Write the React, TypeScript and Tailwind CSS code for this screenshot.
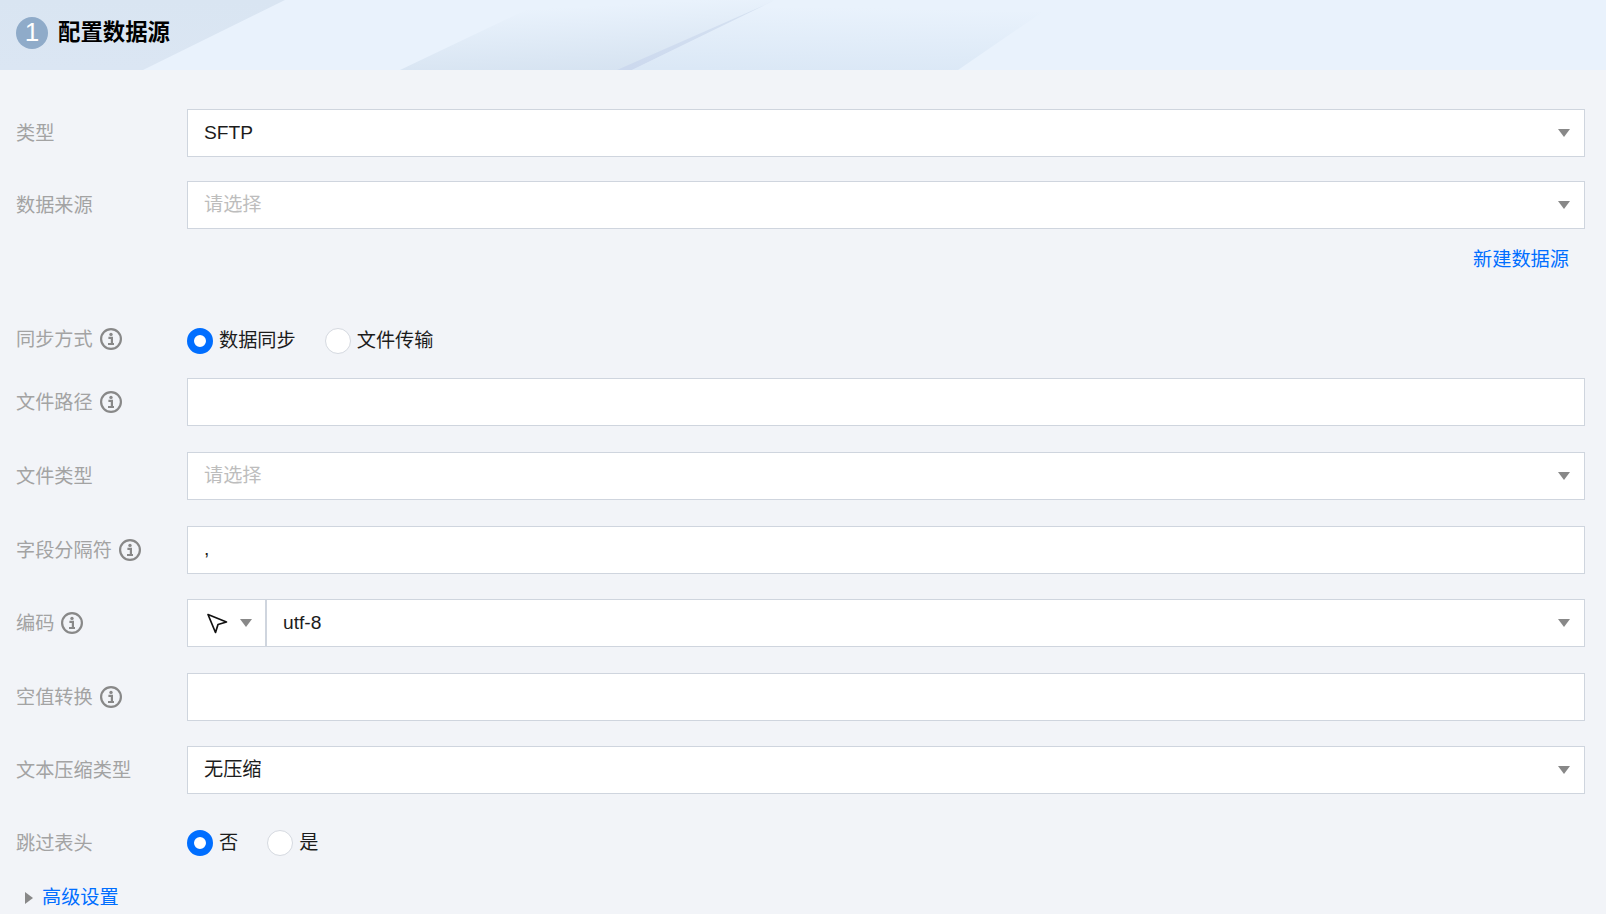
import type { ReactNode } from 'react'

const Caret = () => (
  <span className="h-0 w-0 border-x-[6.5px] border-t-[8px] border-x-transparent border-t-[#888888]" />
)

const InfoIcon = () => (
  <svg width="22" height="22" viewBox="0 0 22 22" fill="none" className="shrink-0">
    <circle cx="11" cy="11" r="9.9" stroke="#888888" strokeWidth="2.2" />
    <circle cx="11" cy="6.4" r="1.7" fill="#888888" />
    <path d="M8.4 9.9h3.5v6.2M8 16h6" stroke="#888888" strokeWidth="2.2" />
  </svg>
)

const Label = ({ text, info, lifted }: { text: string; info?: boolean; lifted?: boolean }) => (
  <div className={lifted ? 'mb-1 flex w-[171px] shrink-0 items-center gap-[7px] text-[#a3a3a3]' : 'flex w-[171px] shrink-0 items-center gap-[7px] text-[#a3a3a3]'}>
    <span className="pt-[3px]">{text}</span>
    {info && <InfoIcon />}
  </div>
)

const Row = ({ label, info, children }: { label: string; info?: boolean; children: ReactNode }) => (
  <div className="flex items-center">
    <Label text={label} info={info} />
    {children}
  </div>
)

const Field = ({ value, placeholder, select }: { value?: string; placeholder?: string; select?: boolean }) => (
  <div className="flex h-12 flex-1 items-center justify-between border border-[#cfd5de] bg-white pl-[16px] pr-[14px]">
    <span className={value ? 'text-[#1c1c1c]' : 'text-[#bdbdbd]'}>{value ?? placeholder}</span>
    {select && <Caret />}
  </div>
)

const Radio = ({ text, checked }: { text: string; checked?: boolean }) => (
  <div className="flex items-center gap-[6px] text-[#1c1c1c]">
    {checked ? (
      <span className="size-[26px] rounded-full border-[7px] border-[#006eff] bg-white" />
    ) : (
      <span className="size-[26px] rounded-full border border-[#d5d9e0] bg-white" />
    )}
    <span className="pt-[2px]">{text}</span>
  </div>
)

const App = () => {
  return (
    <div className="h-[914px] w-[1606px] overflow-hidden bg-[#f2f4f8] font-['Liberation_Sans','Noto_Sans_CJK_SC',sans-serif] text-[19.2px]">
      <div className="relative flex h-[70px] items-center gap-[10px] bg-[#e9f2fc] px-4 pb-[5px]">
        <svg width="1606" height="70" viewBox="0 0 1606 70" className="absolute inset-0">
          <defs>
            <linearGradient id="left" x1="0" y1="0" x2="0" y2="1">
              <stop offset="0" stopColor="#d9e5f2" />
              <stop offset="1" stopColor="#dbe6f3" />
            </linearGradient>
            <linearGradient id="mid" x1="0.25" y1="0" x2="0.55" y2="1">
              <stop offset="0.15" stopColor="#d6e3f1" stopOpacity="0" />
              <stop offset="1" stopColor="#d6e3f1" />
            </linearGradient>
            <linearGradient id="right" x1="0.45" y1="0" x2="0.35" y2="1">
              <stop offset="0.1" stopColor="#dbe8f6" stopOpacity="0" />
              <stop offset="1" stopColor="#dbe8f6" />
            </linearGradient>
            <linearGradient id="band" x1="0.9" y1="0" x2="0.1" y2="1">
              <stop offset="0" stopColor="#d6e2f1" />
              <stop offset="1" stopColor="#ccd9ee" />
            </linearGradient>
          </defs>
          <polygon points="0,0 285,0 143,70 0,70" fill="url(#left)" />
          <polygon points="547,0 775,0 619,70 400,70" fill="url(#mid)" />
          <polygon points="775,0 1060,0 958,70 632,70" fill="url(#right)" />
          <polygon points="760,7 775,0 632,70 617,70" fill="url(#band)" />
        </svg>
        <span className="relative flex size-8 items-center justify-center rounded-full bg-[#8fabc9] text-[26px] text-white">
          1
        </span>
        <span className="relative text-[22.4px] font-bold text-black">配置数据源</span>
      </div>

      <div className="flex flex-col pl-4 pr-[21px] pt-[39px]">
        <div className="flex flex-col gap-6">
          <Row label="类型">
            <Field value="SFTP" select />
          </Row>
          <Row label="数据来源">
            <Field placeholder="请选择" select />
          </Row>
        </div>
        <div className="mt-[17px] flex justify-end pr-4 text-[#006eff]">新建数据源</div>

        <div className="mt-[53px] flex h-[26px] items-center">
          <Label text="同步方式" info lifted />
          <div className="flex gap-[29px]">
            <Radio text="数据同步" checked />
            <Radio text="文件传输" />
          </div>
        </div>

        <div className="mt-[24.6px] flex flex-col gap-[25.6px]">
          <Row label="文件路径" info>
            <Field />
          </Row>
          <Row label="文件类型">
            <Field placeholder="请选择" select />
          </Row>
          <Row label="字段分隔符" info>
            <Field value="," />
          </Row>
          <Row label="编码" info>
            <div className="flex h-12 w-[80px] shrink-0 items-center justify-between border border-r-2 border-[#cfd5de] bg-white pl-[18px] pr-[13px]">
              <svg width="22" height="22" viewBox="0 0 22 22" fill="none">
                <path d="M2 2.5 20.5 10 12 12.5 9.5 20.5Z" stroke="#111111" strokeWidth="1.7" strokeLinejoin="round" />
              </svg>
              <Caret />
            </div>
            <div className="flex h-12 flex-1 items-center justify-between border border-l-0 border-[#cfd5de] bg-white pl-[16px] pr-[14px]">
              <span className="text-[#1c1c1c]">utf-8</span>
              <Caret />
            </div>
          </Row>
          <Row label="空值转换" info>
            <Field />
          </Row>
          <Row label="文本压缩类型">
            <Field value="无压缩" select />
          </Row>
        </div>

        <div className="mt-[35.4px] flex h-[26px] items-center">
          <Label text="跳过表头" />
          <div className="flex gap-[29px]">
            <Radio text="否" checked />
            <Radio text="是" />
          </div>
        </div>

        <div className="mt-7 flex items-center gap-[9px] pl-[9px] text-[#006eff]">
          <span className="h-0 w-0 border-y-[6.5px] border-l-[8px] border-y-transparent border-l-[#888888]" />
          <span>高级设置</span>
        </div>
      </div>
    </div>
  )
}

export default App
